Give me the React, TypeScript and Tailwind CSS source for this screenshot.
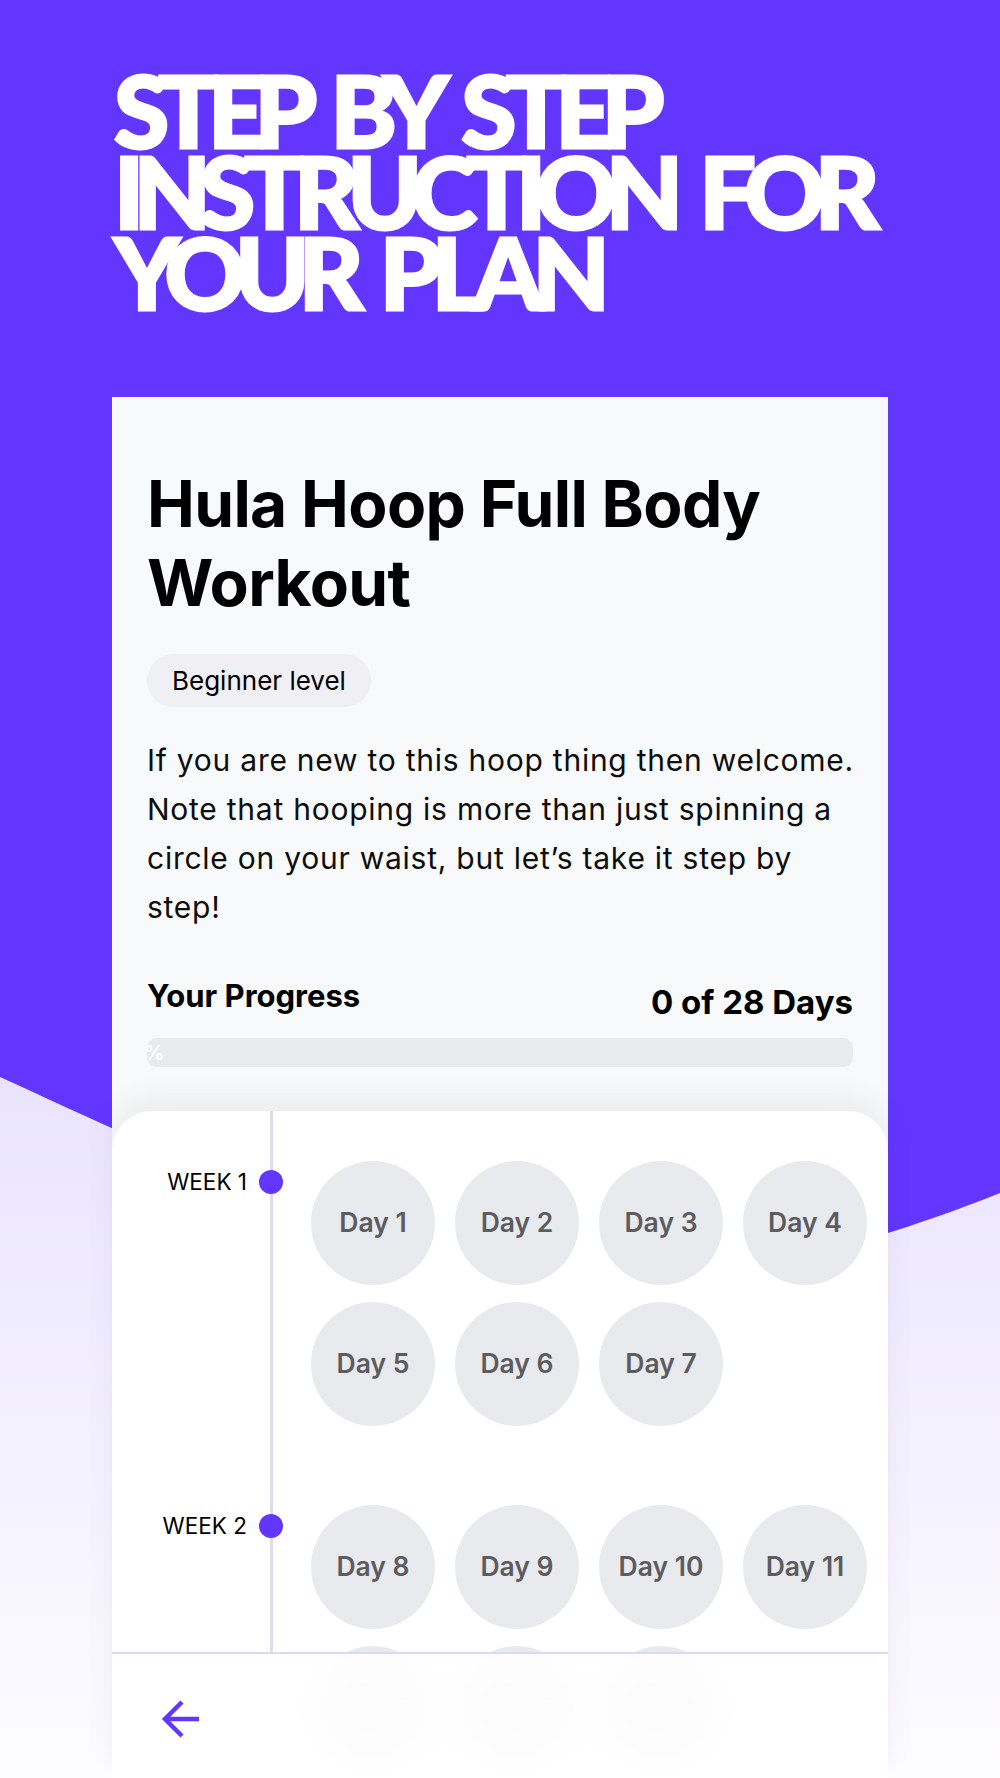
import React from 'react';

const weeks = [
  { label: 'WEEK 1', days: [1, 2, 3, 4, 5, 6, 7] },
  { label: 'WEEK 2', days: [8, 9, 10, 11, 12, 13, 14] },
  { label: 'WEEK 3', days: [15, 16, 17, 18, 19, 20, 21] },
];

const DayBubble: React.FC<{ n: number }> = ({ n }) => (
  <div className="w-[124px] h-[124px] rounded-full bg-[#e8eaed] flex items-center justify-center text-[26.5px] font-semibold text-[#5c5c60]">
    Day {n}
  </div>
);

const App: React.FC = () => {
  return (
    <div
      className="relative w-full h-[1778px] overflow-hidden bg-[linear-gradient(to_bottom,#e9e3ff_60%,#fdfcff_100%)]"
      style={{ fontFamily: 'Inter, "Noto Sans", sans-serif' }}
    >
      {/* purple wave behind everything */}
      <svg className="absolute inset-0 w-full h-full" viewBox="0 0 1000 1778" preserveAspectRatio="none">
        <path d="M0 0 H1000 V1193 C600 1353 400 1261 0 1077 Z" fill="#6236ff" />
      </svg>

      <div className="relative flex flex-col h-full">
        <h1 className="ml-[114px] mt-[69px] text-white uppercase font-black text-[100px] leading-[81px] tracking-[-0.108em] [word-spacing:0.14em] [-webkit-text-stroke:3px_white] font-['Lato',sans-serif]">
          Step by step
          <br />
          instruction for
          <br />
          your plan
        </h1>

        <div className="mx-[112px] mt-[85px] flex-1 flex flex-col bg-[#f7f9fa] min-h-0">
          <div className="px-[35px] pt-[67px]">
            <h2 className="text-[64px] leading-[79px] font-bold text-black tracking-[-0.01em]">
              Hula Hoop Full Body
              <br />
              Workout
            </h2>

            <span className="inline-block mt-8 h-[53px] px-[25px] rounded-full bg-[#efeff4] text-[26px] leading-[53px] text-black">
              Beginner level
            </span>

            <p className="mt-[29px] text-[30px] leading-[49px] tracking-[0.025em] text-[#0d0d0d] whitespace-nowrap">
              If you are new to this hoop thing then welcome.
              <br />
              Note that hooping is more than just spinning a
              <br />
              circle on your waist, but let’s take it step by
              <br />
              step!
            </p>

            <div className="mt-[46px] flex justify-between items-start">
              <span className="text-[31px] leading-[36px] font-bold text-black">Your Progress</span>
              <span className="mt-[5px] text-[33px] leading-[38px] font-bold text-black">0 of 28 Days</span>
            </div>

            <div className="mt-[17px] h-[29px] rounded-[10px] bg-[#e8eaed] overflow-hidden flex items-center">
              <span className="-ml-[3px] text-white text-[20px] font-bold">%</span>
            </div>
          </div>

          <div className="mt-[44px] flex-1 min-h-0 overflow-hidden rounded-t-[40px] bg-white shadow-[0_-14px_30px_rgba(0,0,0,0.05)]">
            {weeks.map((w) => (
              <div key={w.label} className="flex">
                <div className="w-[158px] shrink-0 pt-[59px] flex justify-end items-start">
                  <div className="flex items-center gap-3 -mr-[13px]">
                    <span className="text-[22.5px] leading-[24px] text-black">{w.label}</span>
                    <span className="relative z-10 w-6 h-6 rounded-full bg-[#6236ff]" />
                  </div>
                </div>
                <div className="border-l-[3px] border-[#dedbf0] pl-[38px] pt-[50px] pb-[29px]">
                  <div className="grid grid-cols-4 gap-x-5 gap-y-[17px] w-[556px]">
                    {w.days.map((d) => (
                      <DayBubble key={d} n={d} />
                    ))}
                  </div>
                </div>
              </div>
            ))}
          </div>
        </div>
      </div>

      {/* bottom nav lies over the scrolling sheet */}
      <div className="absolute left-[112px] bottom-0 w-[776px] h-[126px] border-t-2 border-[#dcd8ef] bg-white/90 backdrop-blur-xl">
        <button className="ml-[48px] mt-[45px] text-[#6236ff]">
          <svg width="40" height="40" viewBox="0 0 40 40" fill="none" stroke="currentColor" strokeWidth="4.5" strokeLinejoin="miter">
            <path d="M22 3 L5 20 L22 37" />
            <path d="M5 20 H39" />
          </svg>
        </button>
      </div>
    </div>
  );
};

export default App;
